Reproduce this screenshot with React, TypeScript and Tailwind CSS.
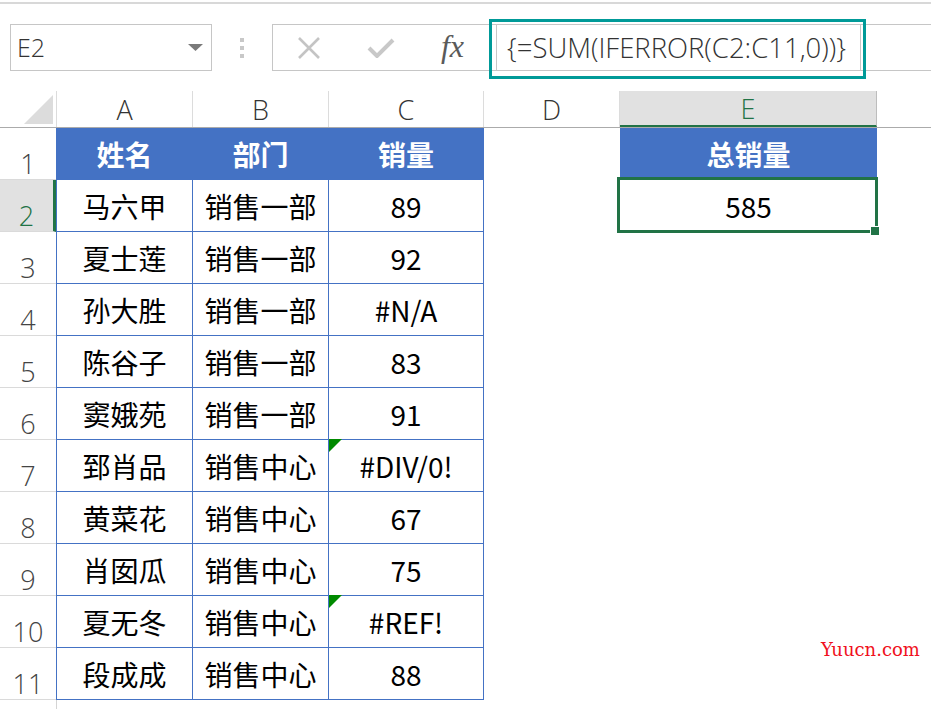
import React from "react";

// Sheet data
// -----------------------------------------------------------------------------

type RowData = { name: string; dept: string; sales: string; flag?: boolean };

const rows: RowData[] = [
  { name: "马六甲", dept: "销售一部", sales: "89" },
  { name: "夏士莲", dept: "销售一部", sales: "92" },
  { name: "孙大胜", dept: "销售一部", sales: "#N/A" },
  { name: "陈谷子", dept: "销售一部", sales: "83" },
  { name: "窦娥苑", dept: "销售一部", sales: "91" },
  { name: "郅肖品", dept: "销售中心", sales: "#DIV/0!", flag: true },
  { name: "黄菜花", dept: "销售中心", sales: "67" },
  { name: "肖囡瓜", dept: "销售中心", sales: "75" },
  { name: "夏无冬", dept: "销售中心", sales: "#REF!", flag: true },
  { name: "段成成", dept: "销售中心", sales: "88" },
];

const blue = "border-[#4472c4]";
const thin = "font-['Open_Sans',sans-serif] font-light";

// Formula bar
// -----------------------------------------------------------------------------

function FormulaBar() {
  return (
    <>
      <div className="mt-[2px] h-[2px] bg-[#d8d8d8]" />
      <div className="flex h-[87px] items-start pt-[20px]">
        <div className="ml-[10px] flex h-[47px] w-[202px] shrink-0 items-center justify-between border border-[#c6c6c6] pl-[6px] pr-[8px]">
          <span className={`${thin} text-[25px] leading-none text-[#333]`}>E2</span>
          <svg width="15" height="7" viewBox="0 0 15 7">
            <path d="M0 0 H15 L7.5 7 Z" fill="#7a7a7a" />
          </svg>
        </div>
        <div className="flex h-[47px] w-[60px] shrink-0 flex-col items-center justify-center gap-[4px]">
          <div className="h-[4px] w-[4px] bg-[#c8c8c8]" />
          <div className="h-[4px] w-[4px] bg-[#c8c8c8]" />
          <div className="h-[4px] w-[4px] bg-[#c8c8c8]" />
        </div>
        <div className="flex h-[47px] flex-1 items-start border-y border-l border-[#c6c6c6]">
          <div className="flex h-full w-[72px] items-center justify-center">
            <svg width="24" height="22" viewBox="0 0 24 22">
              <path d="M2 1 L22 21 M22 1 L2 21" stroke="#c4c4c4" strokeWidth="2.6" />
            </svg>
          </div>
          <div className="flex h-full w-[71px] items-center justify-center">
            <svg width="28" height="20" viewBox="0 0 28 20">
              <path d="M2 10 L10 18 L26 2" stroke="#c8c8c8" strokeWidth="4" fill="none" />
            </svg>
          </div>
          <div className="flex h-full w-[73px] items-center justify-center pb-[3px]">
            <span className="font-['Liberation_Serif',serif] text-[32px] italic leading-none text-[#5a5a5a]">
              fx
            </span>
          </div>
          <div className="-mt-[6px] h-[60px] w-[377px] shrink-0 border-[3px] border-[#009a98] pl-[4px] pt-[2px]">
            <div className="flex h-[47px] w-[365px] items-center border border-[#c6c6c6] pl-[10px]">
              <span className={`${thin} text-[27.5px] leading-none text-[#333]`}>
                {"{=SUM(IFERROR(C2:C11,0))}"}
              </span>
            </div>
          </div>
        </div>
      </div>
    </>
  );
}

// Column header
// -----------------------------------------------------------------------------

function ColumnHeader() {
  const cols = [
    { label: "A", w: "w-[136px]" },
    { label: "B", w: "w-[136px]" },
    { label: "C", w: "w-[155px]" },
    { label: "D", w: "w-[136px]" },
  ];
  return (
    <div className="flex h-[37px] border-b border-[#ababab]">
      <div className="relative w-[57px] shrink-0 border-r border-[#dcdcdc]">
        <svg className="absolute left-[24px] top-[4px]" width="29" height="29" viewBox="0 0 29 29">
          <path d="M29 0 V29 H0 Z" fill="#dcdcdc" />
        </svg>
      </div>
      {cols.map((c) => (
        <div
          key={c.label}
          className={`${c.w} ${thin} flex shrink-0 items-center justify-center border-r border-[#dcdcdc] pt-[3px] text-[27px] text-[#333]`}
        >
          {c.label}
        </div>
      ))}
      <div className={`${thin} flex w-[257px] shrink-0 items-center justify-center border-r border-b-2 border-r-[#bdbdbd] border-b-[#217346] bg-[#e1e1e1] pt-[3px] text-[27px] text-[#217346]`}>
        E
      </div>
      <div className="flex-1" />
    </div>
  );
}

// Rows
// -----------------------------------------------------------------------------

function RowHead({ n, selected }: { n: number; selected?: boolean }) {
  return (
    <div
      className={`${thin} flex w-[56px] shrink-0 items-end justify-center border-b border-[#dadada] pb-[2px] text-[27px] leading-none ${
        selected
          ? "border-r-[3px] border-r-[#217346] bg-[#e1e1e1] text-[#217346]"
          : "text-[#444]"
      }`}
    >
      {n}
    </div>
  );
}

function HeaderRow() {
  const th = `flex shrink-0 items-center justify-center border-b border-r ${blue} bg-[#4472c4] text-[28px] font-bold text-white`;
  return (
    <div className="flex h-[52px]">
      <RowHead n={1} />
      <div className={`${th} w-[137px] border-l`}>姓名</div>
      <div className={`${th} w-[136px]`}>部门</div>
      <div className={`${th} w-[155px]`}>销量</div>
      <div className="w-[136px] shrink-0" />
      <div className="flex w-[257px] shrink-0 items-center justify-center bg-[#4472c4] text-[28px] font-bold text-white">
        总销量
      </div>
      <div className="flex-1" />
    </div>
  );
}

function DataRow({ n, row }: { n: number; row: RowData }) {
  const td = `flex shrink-0 items-center justify-center border-b border-r ${blue} text-[28px] text-black`;
  const selected = n === 2;
  return (
    <div className="flex h-[52px]">
      <RowHead n={n} selected={selected} />
      <div className={`${td} w-[137px] border-l`}>{row.name}</div>
      <div className={`${td} w-[136px]`}>{row.dept}</div>
      <div className={`${td} relative w-[155px]`}>
        {row.flag && (
          <svg className="absolute -top-[1px] left-0" width="13" height="13" viewBox="0 0 13 13">
            <path d="M0 0 H13 L0 13 Z" fill="#008a00" />
          </svg>
        )}
        {row.sales}
      </div>
      <div className="w-[136px] shrink-0" />
      <div className="relative flex w-[257px] shrink-0 items-center justify-center text-[28px] text-black">
        {selected && (
          <>
            <div className="absolute -bottom-[1px] -left-[3px] -right-[1px] -top-[3px] border-[3px] border-[#217346]" />
            <div className="absolute -bottom-[4px] -right-[3px] h-[10px] w-[10px] border border-white bg-[#217346]" />
            585
          </>
        )}
      </div>
      <div className="flex-1" />
    </div>
  );
}

// Default export
// -----------------------------------------------------------------------------

export default function App() {
  return (
    <div className="relative h-[709px] w-[931px] overflow-hidden bg-white font-['Noto_Sans_CJK_SC',sans-serif]">
      <FormulaBar />
      <ColumnHeader />
      <HeaderRow />
      {rows.map((r, i) => (
        <DataRow key={i} n={i + 2} row={r} />
      ))}
      <div className="flex h-[20px]">
        <div className="w-[57px] shrink-0 border-r border-[#d4d4d4]" />
      </div>

      <span className="absolute left-[821px] top-[641px] font-['DejaVu_Serif',serif] text-[18px] leading-none text-[#f01020]">
        Yuucn.com
      </span>
    </div>
  );
}
